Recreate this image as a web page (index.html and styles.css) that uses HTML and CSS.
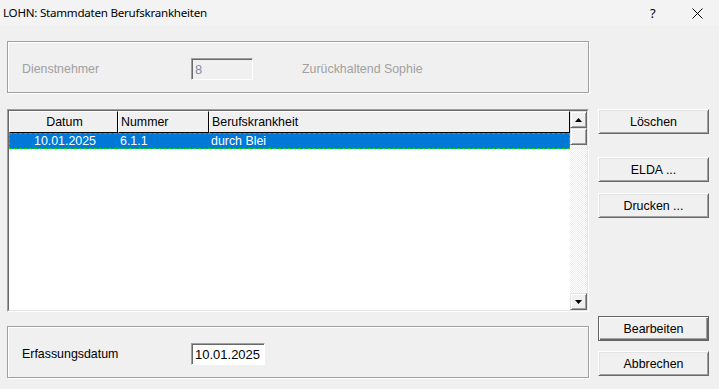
FILE: index.html
```html
<!DOCTYPE html>
<html lang="de">
<head>
  <meta charset="UTF-8" />
  <title>LOHN: Stammdaten Berufskrankheiten</title>
  <link rel="stylesheet" href="styles.css">
</head>
<body>
  <!-- Titelleiste -->
  <div class="titlebar">
    <span class="title">LOHN: Stammdaten Berufskrankheiten</span>
    <span class="title-help">?</span>
    <span class="title-close">
      <svg width="11" height="11" viewBox="0 0 11 11">
        <path d="M0.5 0.5 L10.5 10.5 M10.5 0.5 L0.5 10.5" stroke="#000" stroke-width="1" fill="none"/>
      </svg>
    </span>
  </div>

  <div class="dialog">
    <div class="left-col">
      <!-- Dienstnehmer -->
      <div class="group">
        <div class="field-row">
          <span class="label disabled">Dienstnehmer</span>
          <div class="edit edit-disabled">8</div>
          <span class="name disabled">Zurückhaltend Sophie</span>
        </div>
      </div>

      <!-- Liste -->
      <div class="list-outer">
        <div class="list-inner">
          <div class="list-body">
            <div class="header">
              <div class="hcell col-datum center">Datum</div>
              <div class="hcell col-nummer">Nummer</div>
              <div class="hcell col-text">Berufskrankheit</div>
            </div>
            <div class="row selected">
              <div class="cell col-datum center">10.01.2025</div>
              <div class="cell col-nummer">6.1.1</div>
              <div class="cell col-text">durch Blei</div>
            </div>
          </div>
          <div class="scrollbar">
            <div class="sb-btn">
              <svg width="7" height="4" viewBox="0 0 7 4"><path d="M3.5 0 L7 4 L0 4 Z" fill="#000"/></svg>
            </div>
            <div class="sb-btn"></div>
            <div class="sb-track"></div>
            <div class="sb-btn">
              <svg width="7" height="4" viewBox="0 0 7 4"><path d="M0 0 L7 0 L3.5 4 Z" fill="#000"/></svg>
            </div>
          </div>
        </div>
      </div>

      <!-- Erfassungsdatum -->
      <div class="group group-bottom">
        <div class="field-row">
          <span class="label">Erfassungsdatum</span>
          <div class="edit edit-date">10.01.2025</div>
        </div>
      </div>
    </div>

    <div class="right-col">
      <div class="btn btn-loeschen">Löschen</div>
      <div class="btn btn-elda">ELDA ...</div>
      <div class="btn btn-drucken">Drucken ...</div>
      <div class="btn btn-default btn-bearbeiten">Bearbeiten</div>
      <div class="btn btn-abbrechen">Abbrechen</div>
    </div>
  </div>
</body>
</html>
```

FILE: styles.css
```css
* {
  margin: 0;
  padding: 0;
  box-sizing: border-box;
}
html, body {
  width: 100%;
  height: 100%;
  background: #f0f0f0;
  font-family: 'Liberation Sans', Arial, sans-serif;
  font-size: 12.4px;
  color: #000;
  overflow: hidden;
}
.titlebar {
  height: 25px;
  background: #f3f3f3;
  display: flex;
  align-items: center;
  padding-left: 3px;
  font-family: 'Noto Sans', sans-serif;
  font-size: 11.6px;
}
.title {
  flex: 1;
  letter-spacing: -0.25px;
}
.title-help {
  width: 20px;
  margin-right: 22px;
  font-size: 13px;
}
.title-close {
  width: 27px;
  display: flex;
  align-items: center;
  margin-top: 1px;
}
.dialog {
  display: flex;
  padding: 16px 0 0 7px;
  gap: 9px;
}
.left-col {
  width: 582px;
  display: flex;
  flex-direction: column;
}
.group {
  height: 52px;
  border: 1px solid #a0a0a0;
  box-shadow: inset 1px 1px 0 #fff, 1px 1px 0 #fff;
  padding: 16px 0 0 14px;
}
.group-bottom {
  margin-top: 14px;
}
.field-row {
  display: flex;
  align-items: center;
  height: 22px;
}
.label {
  width: 169px;
}
.disabled {
  color: #a0a0a0;
}
.edit {
  height: 22px;
  border: 1px solid;
  border-color: #a0a0a0 #fff #fff #a0a0a0;
  box-shadow: inset 1px 1px 0 #696969;
  padding: 3px 0 0 3px;
  line-height: 15px;
}
.edit-disabled {
  width: 62px;
  background: #f0f0f0;
  color: #7d8fa6;
  font-size: 13px;
}
.edit-date {
  width: 74px;
  background: #fff;
  font-size: 13px;
}
.name {
  margin-left: 49px;
}

/* Liste */
.list-outer {
  margin-top: 16px;
  height: 203px;
  border: 1px solid;
  border-color: #a0a0a0 #fff #fff #a0a0a0;
}
.list-inner {
  height: 100%;
  border: 1px solid;
  border-color: #696969 #e3e3e3 #e3e3e3 #696969;
  background: #fff;
  display: flex;
}
.list-body {
  flex: 1;
}
.header {
  display: flex;
  height: 22px;
  background: #f0f0f0;
}
.hcell {
  border-top: 1px solid #fff;
  border-left: 1px solid #fff;
  border-right: 1px solid #000;
  border-bottom: 1px solid #000;
  padding: 3px 0 0 2px;
  line-height: 15px;
}
.col-datum {
  width: 109px;
}
.col-nummer {
  width: 91px;
}
.col-text {
  flex: 1;
}
.center {
  text-align: center;
}
.row {
  display: flex;
  height: 16px;
  line-height: 14px;
}
.row.selected {
  background: #0078d7;
  color: #fff;
  border: 1px dashed #00e000;
}
.cell {
  padding-left: 2px;
}
.row .col-datum {
  width: 108px;
}
.scrollbar {
  width: 17px;
  display: flex;
  flex-direction: column;
}
.sb-btn {
  height: 17px;
  background: #f0f0f0;
  border: 1px solid;
  border-color: #e3e3e3 #696969 #696969 #e3e3e3;
  box-shadow: inset 1px 1px 0 #fff, inset -1px -1px 0 #a0a0a0;
  display: flex;
  align-items: center;
  justify-content: center;
}
.sb-track {
  flex: 1;
  background: repeating-conic-gradient(#fff 0 25%, #ececec 0 50%) 0 0 / 2px 2px;
}

/* Buttons */
.right-col {
  width: 111px;
  display: flex;
  flex-direction: column;
}
.btn {
  height: 25px;
  background: #f0f0f0;
  border: 1px solid;
  border-color: #fff #696969 #696969 #fff;
  box-shadow: inset 1px 1px 0 #e3e3e3, inset -1px -1px 0 #a0a0a0;
  display: flex;
  align-items: center;
  justify-content: center;
}
.btn-loeschen {
  margin-top: 68px;
}
.btn-elda {
  margin-top: 23px;
}
.btn-drucken {
  margin-top: 11px;
}
.btn-bearbeiten {
  margin-top: 98px;
}
.btn-abbrechen {
  margin-top: 10px;
}
.btn-default {
  border-color: #646464;
  box-shadow: inset 1px 1px 0 #fff, inset -1px -1px 0 #696969, inset -2px -2px 0 #a0a0a0;
}
```
